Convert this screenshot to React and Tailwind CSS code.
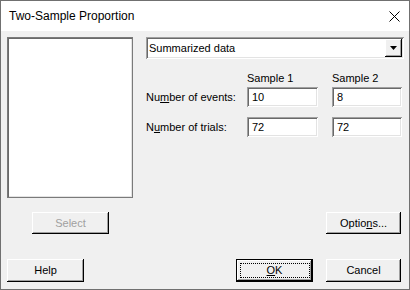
const font = { fontFamily: '"Liberation Sans", Arial, sans-serif' };

const sunken =
  "shadow-[inset_1px_1px_0_#a0a0a0,inset_-1px_-1px_0_#ffffff,inset_2px_2px_0_#696969,inset_-2px_-2px_0_#e3e3e3]";
const raised =
  "shadow-[inset_-1px_-1px_0_#000000,inset_1px_1px_0_#ffffff,inset_-2px_-2px_0_#a0a0a0,inset_2px_2px_0_#f0f0f0]";

function Button({ children, className = "", disabled = false, focused = false }) {
  return (
    <div
      className={`relative flex items-center justify-center bg-[#f0f0f0] text-[11px] ${
        disabled ? "text-[#a0a0a0]" : "text-black"
      } ${focused ? "border border-black" : ""} ${className}`}
    >
      <div className={`absolute inset-0 ${raised}`} />
      {focused && (
        <div className="absolute left-[3px] right-[2px] top-[3px] bottom-[3px] border border-dotted border-black" />
      )}
      <span className="relative">{children}</span>
    </div>
  );
}

function Field({ value, className = "" }) {
  return (
    <div className={`h-[20px] bg-white flex items-center pl-[5px] text-[11px] text-black ${sunken} ${className}`}>
      {value}
    </div>
  );
}

export default function App() {
  return (
    <div
      className="w-[410px] h-[290px] border border-[#707070] flex flex-col bg-white"
      style={font}
    >
      {/* title bar */}
      <div className="h-[30px] bg-white flex items-center justify-between pl-[8px] pr-[9px]">
        <span className="text-[12px] text-black">Two-Sample Proportion</span>
        <svg width="11" height="11" viewBox="0 0 11 11" className="mt-[1px]">
          <path d="M0.5 0.5 L10.5 10.5 M10.5 0.5 L0.5 10.5" stroke="#000" strokeWidth="1" />
        </svg>
      </div>

      {/* body */}
      <div className="flex-1 bg-[#f0f0f0] flex flex-col pt-[6px]">
        <div className="flex pl-[6px] gap-[13px]">
          <div className="w-[126px] h-[161px] bg-white border border-[#7a7a7a] shadow-[inset_1px_1px_0_#696969,inset_-1px_-1px_0_#e3e3e3]" />

          <div className="flex flex-col w-[258px]">
            <div className={`h-[22px] bg-white flex items-center justify-between ${sunken}`}>
              <span className="pl-[3px] text-[11px] text-black">Summarized data</span>
              <div className={`relative w-[17px] h-[18px] mr-[2px] bg-[#f0f0f0] flex items-center justify-center ${raised}`}>
                <svg width="7" height="4" viewBox="0 0 7 4">
                  <path d="M0 0 H7 L3.5 4 Z" fill="#000" />
                </svg>
              </div>
            </div>

            <div className="grid grid-cols-[101px_85px_70px] mt-[12px] text-[11px] text-black items-center">
              <div />
              <div className="h-[14px] leading-[14px]">Sample 1</div>
              <div className="h-[14px] leading-[14px]">Sample 2</div>

              <div className="mt-[2px] whitespace-nowrap">
                Nu<span className="underline">m</span>ber of events:
              </div>
              <div className="mt-[2px]">
                <Field value="10" className="w-[71px]" />
              </div>
              <div className="mt-[2px]">
                <Field value="8" />
              </div>

              <div className="mt-[10px] whitespace-nowrap">
                N<span className="underline">u</span>mber of trials:
              </div>
              <div className="mt-[10px]">
                <Field value="72" className="w-[71px]" />
              </div>
              <div className="mt-[10px]">
                <Field value="72" />
              </div>
            </div>
          </div>
        </div>

        <div className="flex justify-between pl-[31px] pr-[8px] mt-[14px]">
          <Button disabled className="w-[77px] h-[22px]">
            Select
          </Button>
          <Button className="w-[75px] h-[22px]">
            Optio<span className="underline">n</span>s...
          </Button>
        </div>

        <div className="flex items-center pl-[6px] pr-[8px] mt-[25px]">
          <Button className="w-[77px] h-[23px]">Help</Button>
          <div className="flex-1" />
          <Button focused className="w-[77px] h-[23px]">
            <span className="underline">O</span>K
          </Button>
          <Button className="w-[75px] h-[23px] ml-[13px]">Cancel</Button>
        </div>
      </div>
    </div>
  );
}
